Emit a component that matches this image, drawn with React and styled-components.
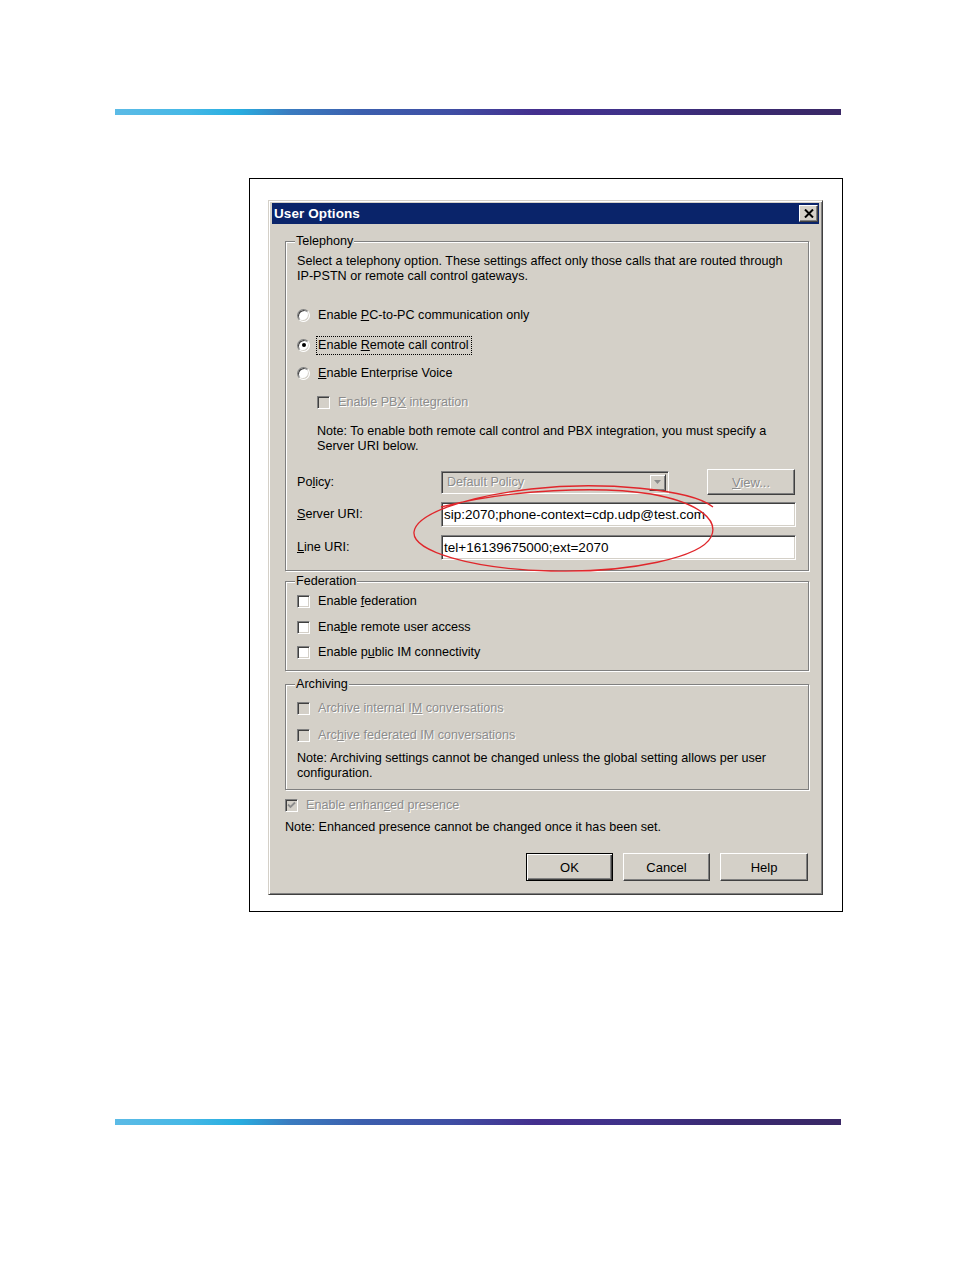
import React from 'react';
import styled, { createGlobalStyle } from 'styled-components';

const Global = createGlobalStyle`
  html, body { margin: 0; padding: 0; background: #fff; }
  body { font-family: "Liberation Sans", Arial, sans-serif; color: #000; }
`;

const Page = styled.div`
  width: 954px;
  height: 1272px;
  display: flex;
  flex-direction: column;
`;

const Bar = styled.div`
  margin-top: ${p => p.$top}px;
  margin-left: 115px;
  width: 726px;
  height: 6px;
  background: linear-gradient(90deg, #5cbbe6 0%, #45b8e6 10%, #28aee0 17%, #3a7cc0 24%, #3c5fae 34%, #3f4fa4 46%, #442f8e 58%, #40328a 70%, #3a2a72 84%, #3a2866 100%);
`;

const Frame = styled.div`
  margin-top: 63px;
  margin-left: 249px;
  width: 594px;
  height: 734px;
  box-sizing: border-box;
  border: 1px solid #000;
  padding: 21px 0 0 18px;
`;

const Dialog = styled.div`
  width: 555px;
  box-sizing: border-box;
  background: #d4d0c8;
  border: 1px solid;
  border-color: #d4d0c8 #404040 #404040 #d4d0c8;
  box-shadow: inset 1px 1px 0 #fff, inset -1px -1px 0 #808080;
  padding: 2px 3px 3px 3px;
  display: flex;
  flex-direction: column;
`;

const TitleBar = styled.div`
  height: 21px;
  background: #0a246a;
  display: flex;
  align-items: center;
  justify-content: space-between;
  padding: 0 1px 0 2px;
`;

const TitleText = styled.span`
  color: #fff;
  font-weight: bold;
  font-size: 13.5px;
  letter-spacing: 0.1px;
`;

const CloseBtn = styled.div`
  width: 19px;
  height: 17px;
  box-sizing: border-box;
  background: #d4d0c8;
  border: 1px solid;
  border-color: #fff #404040 #404040 #fff;
  box-shadow: inset -1px -1px 0 #808080;
  display: flex;
  align-items: center;
  justify-content: center;
`;

const Body = styled.div`
  position: relative;
  padding: 17px 10px 10px 13px;
  display: flex;
  flex-direction: column;
  font-size: 12.6px;
  line-height: 15px;
`;

const Group = styled.div`
  position: relative;
  margin-top: ${p => p.$mt || 0}px;
  border: 1px solid #808080;
  box-shadow: 1px 1px 0 #fff, inset 1px 1px 0 #fff;
  padding: ${p => p.$pt}px 11px ${p => p.$pb}px 11px;
  display: flex;
  flex-direction: column;
`;

const Legend = styled.span`
  position: absolute;
  top: -8px;
  left: 9px;
  padding: 0 1px;
  background: #d4d0c8;
  line-height: 15px;
`;

const Text = styled.div`
  margin-top: ${p => p.$mt || 0}px;
  margin-left: ${p => p.$ml || 0}px;
  white-space: nowrap;
`;

const OptRow = styled.div`
  height: ${p => p.$h || 20}px;
  margin-top: ${p => p.$mt || 0}px;
  margin-left: ${p => p.$ml || 0}px;
  display: flex;
  align-items: center;
  gap: 8px;
  white-space: nowrap;
  color: ${p => (p.$disabled ? '#8c8c8c' : '#000')};
  text-shadow: ${p => (p.$disabled ? '1px 1px 0 #fff' : 'none')};
`;

const Radio = styled.span`
  width: 13px;
  height: 13px;
  box-sizing: border-box;
  border-radius: 50%;
  border: 1px solid;
  border-color: #808080 #fff #fff #808080;
  box-shadow: inset 1px 1px 0 #404040, inset -1px -1px 0 #d4d0c8;
  background: #fff;
  display: flex;
  align-items: center;
  justify-content: center;
  flex: none;
  &::after {
    content: '';
    width: 4px;
    height: 4px;
    border-radius: 50%;
    background: #000;
    display: ${p => (p.$checked ? 'block' : 'none')};
  }
`;

const Check = styled.span`
  width: 13px;
  height: 13px;
  box-sizing: border-box;
  border: 1px solid;
  border-color: #808080 #fff #fff #808080;
  box-shadow: inset 1px 1px 0 #404040, inset -1px -1px 0 #d4d0c8;
  background: ${p => (p.$disabled ? '#d4d0c8' : '#fff')};
  display: flex;
  align-items: center;
  justify-content: center;
  flex: none;
`;

const Focus = styled.span`
  outline: 1px dotted #000;
  outline-offset: 1px;
  padding: 0 1px 0 0;
`;

const FieldRow = styled.div`
  height: ${p => p.$h}px;
  margin-top: ${p => p.$mt}px;
  display: flex;
  align-items: center;
  white-space: nowrap;
`;

const FieldLabel = styled.span`
  width: 144px;
  flex: none;
`;

const Sunken = styled.div`
  width: ${p => p.$w}px;
  height: ${p => p.$h}px;
  box-sizing: border-box;
  border: 1px solid;
  border-color: #808080 #fff #fff #808080;
  box-shadow: inset 1px 1px 0 #404040, inset -1px -1px 0 #d4d0c8;
  background: ${p => (p.$disabled ? '#d4d0c8' : '#fff')};
  display: flex;
  align-items: center;
  padding: 0 2px 0 2px;
  font-size: ${p => (p.$disabled ? '12.6px' : '13.5px')};
  color: ${p => (p.$disabled ? '#8c8c8c' : '#000')};
  text-shadow: ${p => (p.$disabled ? '1px 1px 0 #fff' : 'none')};
`;

const SelectText = styled.span`
  flex: 1;
  padding-left: 3px;
`;

const ArrowBtn = styled.span`
  width: 17px;
  height: 17px;
  box-sizing: border-box;
  background: #d4d0c8;
  border: 1px solid;
  border-color: #d4d0c8 #404040 #404040 #d4d0c8;
  box-shadow: inset 1px 1px 0 #fff, inset -1px -1px 0 #808080;
  display: flex;
  align-items: center;
  justify-content: center;
`;

const Button = styled.div`
  width: ${p => p.$w || 87}px;
  height: ${p => p.$h || 28}px;
  box-sizing: border-box;
  background: #d4d0c8;
  border: 1px solid;
  border-color: ${p => (p.$default ? '#000' : '#fff #404040 #404040 #fff')};
  box-shadow: ${p =>
    p.$default
      ? 'inset 1px 1px 0 #fff, inset -1px -1px 0 #404040, inset -2px -2px 0 #808080'
      : 'inset -1px -1px 0 #808080'};
  display: flex;
  align-items: center;
  justify-content: center;
  font-size: 13px;
  margin-left: ${p => p.$ml || 0}px;
  color: ${p => (p.$disabled ? '#8c8c8c' : '#000')};
  text-shadow: ${p => (p.$disabled ? '1px 1px 0 #fff' : 'none')};
`;

const ButtonRow = styled.div`
  margin-top: 18px;
  display: flex;
  justify-content: flex-end;
  gap: 10px;
  padding-right: 1px;
`;

const Annotation = styled.svg`
  position: absolute;
  left: 115px;
  top: 235px;
  pointer-events: none;
  overflow: visible;
`;

const CheckMark = ({ color }) => (
  <svg width="9" height="8" viewBox="0 0 9 8">
    <path d="M1 3.5 L3.5 6 L8 1.5" fill="none" stroke={color} strokeWidth="1.8" />
  </svg>
);

export default function App() {
  return (
    <Page>
      <Global />
      <Bar $top={109} />
      <Frame>
        <Dialog>
          <TitleBar>
            <TitleText>User Options</TitleText>
            <CloseBtn>
              <svg width="10" height="9" viewBox="0 0 10 9">
                <path d="M1 0.5 L9 8.5 M9 0.5 L1 8.5" stroke="#000" strokeWidth="2" />
              </svg>
            </CloseBtn>
          </TitleBar>
          <Body>
            <Group $pt={12} $pb={10}>
              <Legend>Telephony</Legend>
              <Text>
                Select a telephony option. These settings affect only those calls that are routed through
                <br />
                IP-PSTN or remote call control gateways.
              </Text>
              <OptRow $mt={21}>
                <Radio />
                <span>Enable <u>P</u>C-to-PC communication only</span>
              </OptRow>
              <OptRow $mt={10}>
                <Radio $checked />
                <Focus>Enable <u>R</u>emote call control</Focus>
              </OptRow>
              <OptRow $mt={8}>
                <Radio />
                <span><u>E</u>nable Enterprise Voice</span>
              </OptRow>
              <OptRow $mt={9} $ml={20} $disabled>
                <Check $disabled />
                <span>Enable PB<u>X</u> integration</span>
              </OptRow>
              <Text $mt={12} $ml={20}>
                Note: To enable both remote call control and PBX integration, you must specify a
                <br />
                Server URI below.
              </Text>
              <FieldRow $h={26} $mt={15}>
                <FieldLabel>Po<u>l</u>icy:</FieldLabel>
                <Sunken $w={228} $h={23} $disabled>
                  <SelectText>Default Policy</SelectText>
                  <ArrowBtn>
                    <svg width="7" height="4" viewBox="0 0 7 4">
                      <path d="M0 0 L7 0 L3.5 4 Z" fill="#8c8c8c" />
                    </svg>
                  </ArrowBtn>
                </Sunken>
                <Button $w={88} $h={26} $ml={38} $disabled>
                  <span><u>V</u>iew...</span>
                </Button>
              </FieldRow>
              <FieldRow $h={25} $mt={7}>
                <FieldLabel><u>S</u>erver URI:</FieldLabel>
                <Sunken $w={355} $h={25}>sip:2070;phone-context=cdp.udp@test.com</Sunken>
              </FieldRow>
              <FieldRow $h={25} $mt={8}>
                <FieldLabel><u>L</u>ine URI:</FieldLabel>
                <Sunken $w={355} $h={25}>tel+16139675000;ext=2070</Sunken>
              </FieldRow>
              <Annotation width="330" height="105" viewBox="0 0 330 105">
                <path
                  d="M312 30 C 290 12, 200 4, 130 12 C 60 20, 15 38, 13 55 C 11 74, 70 92, 150 94 C 230 96, 300 80, 310 60 C 318 44, 300 26, 250 17 C 200 9, 110 12, 40 30"
                  fill="none"
                  stroke="#e0262b"
                  strokeWidth="1.3"
                />
              </Annotation>
            </Group>

            <Group $mt={10} $pt={10} $pb={9}>
              <Legend>Federation</Legend>
              <OptRow $h={18}>
                <Check />
                <span>Enable <u>f</u>ederation</span>
              </OptRow>
              <OptRow $h={18} $mt={8}>
                <Check />
                <span>Ena<u>b</u>le remote user access</span>
              </OptRow>
              <OptRow $h={18} $mt={7}>
                <Check />
                <span>Enable p<u>u</u>blic IM connectivity</span>
              </OptRow>
            </Group>

            <Group $mt={13} $pt={14} $pb={8}>
              <Legend>Archiving</Legend>
              <OptRow $h={18} $disabled>
                <Check $disabled />
                <span>Archive internal I<u>M</u> conversations</span>
              </OptRow>
              <OptRow $h={18} $mt={9} $disabled>
                <Check $disabled />
                <span>Arc<u>h</u>ive federated IM conversations</span>
              </OptRow>
              <Text $mt={7}>
                Note: Archiving settings cannot be changed unless the global setting allows per user
                <br />
                configuration.
              </Text>
            </Group>

            <OptRow $h={18} $mt={6} $disabled>
              <Check $disabled>
                <CheckMark color="#8c8c8c" />
              </Check>
              <span>Enable enhan<u>c</u>ed presence</span>
            </OptRow>
            <Text $mt={6}>Note: Enhanced presence cannot be changed once it has been set.</Text>

            <ButtonRow>
              <Button $default>OK</Button>
              <Button>Cancel</Button>
              <Button $w={88}>Help</Button>
            </ButtonRow>
          </Body>
        </Dialog>
      </Frame>
      <Bar $top={207} />
    </Page>
  );
}
